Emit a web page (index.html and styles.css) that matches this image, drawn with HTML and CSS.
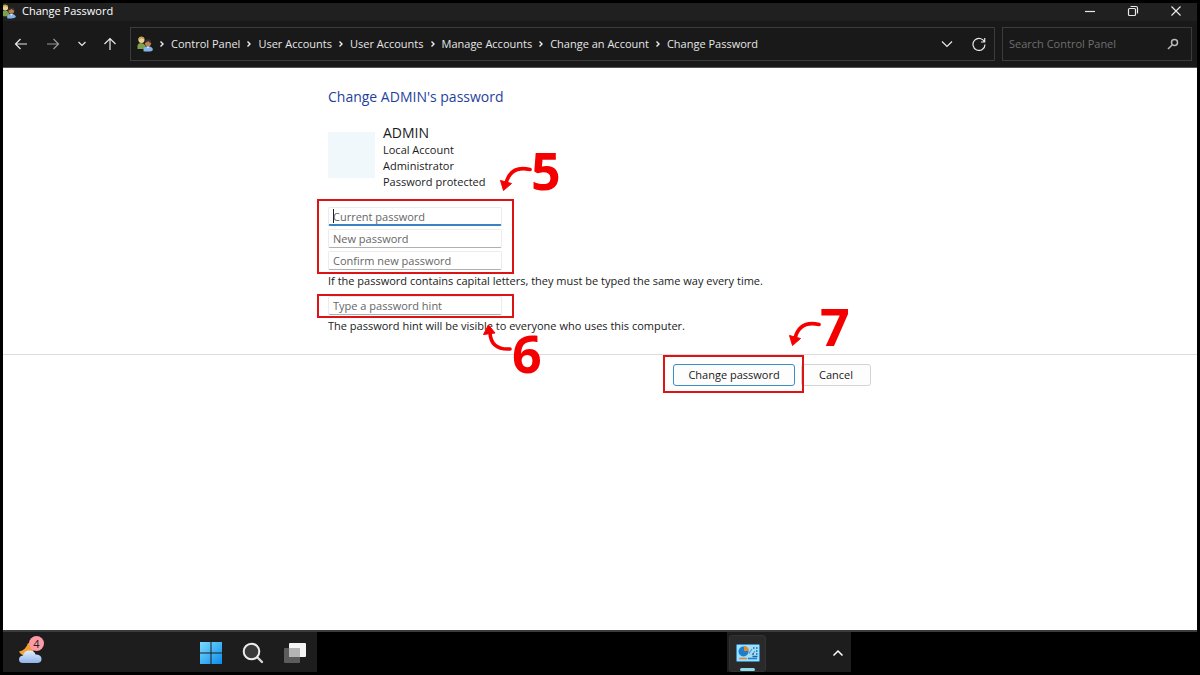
FILE: index.html
```html
<!DOCTYPE html>
<html lang="en">

<head>
    <meta charset="UTF-8">
    <meta name="viewport" content="width=device-width, initial-scale=1.0">
    <title>Change Password</title>
    <link rel="stylesheet" href="styles.css">
</head>

<body>
    <svg class="defs" aria-hidden="true">
        <defs>
            <symbol id="users" viewBox="0 0 16 16">
                <path d="M0.500 13V9.500Q1 7 4 7T8.500 9.500V13z" fill="#7f9f4c" />
                <circle cx="4.500" cy="4" r="3" fill="#e8cf9a" />
                <path d="M1.300 5V2.600Q2 0.300 4.600 0.400T7.600 3Q5.500 3.400 4.300 2.200Q3.300 3.300 2.300 3.500z" fill="#c7a54b" />
                <path d="M6.500 15.300V13Q7.500 10.300 11 10.300T15.800 13V14Q15 15.500 11 15.500T6.500 15.300z" fill="#84b4ea" />
                <path d="M9.500 10.500L11 12.500L12.600 10.500z" fill="#e9f2fb" />
                <circle cx="11" cy="7.200" r="3.100" fill="#b98254" />
                <path d="M8 7Q7.500 3.400 11 3.300T14.200 7.300Q12.500 6.600 11.500 5.300Q10 6 8 7z" fill="#3d2c22" />
            </symbol>
            <symbol id="chevron" viewBox="0 0 6 8">
                <path d="M1.500 1.500L4 4L1.500 6.500" fill="none" stroke="#f0f0f0" stroke-width="1.400" />
            </symbol>
            <symbol id="arrow" viewBox="0 0 34 28">
                <path d="M30 4.500Q11 0 6 18" fill="none" stroke="#f50000" stroke-width="3.600" stroke-linecap="round" />
                <path d="M0.500 15.500L3.500 25.500L11.500 18.500z" fill="#f50000" stroke="#f50000" stroke-linejoin="round" />
            </symbol>
        </defs>
    </svg>

    <div class="window">
        <header class="titlebar">
            <svg class="title-icon" viewBox="2 0 14 16"><use href="#users" width="16" height="16" /></svg>
            <span class="title">Change Password</span>
            <div class="window-controls">
                <button type="button" aria-label="Minimize">
                    <svg width="12" height="12" viewBox="0 0 12 12"><path d="M1 6.500H11" /></svg>
                </button>
                <button type="button" aria-label="Restore">
                    <svg width="12" height="12" viewBox="0 0 12 12">
                        <rect x="1.500" y="3.500" width="7" height="7" rx="1" />
                        <path d="M3.500 1.500H9Q10.500 1.500 10.500 3V8.500" />
                    </svg>
                </button>
                <button type="button" aria-label="Close">
                    <svg width="12" height="12" viewBox="0 0 12 12"><path d="M1.500 1.500L10.500 10.500M10.500 1.500L1.500 10.500" /></svg>
                </button>
            </div>
        </header>

        <div class="navbar">
            <div class="nav-buttons">
                <button type="button" aria-label="Back">
                    <svg width="14" height="14" viewBox="0 0 14 14"><path d="M13 7H1.500M6.500 2L1.500 7L6.500 12" /></svg>
                </button>
                <button type="button" class="dim" aria-label="Forward">
                    <svg width="14" height="14" viewBox="0 0 14 14"><path d="M1 7H12.500M7.500 2L12.500 7L7.500 12" /></svg>
                </button>
                <button type="button" class="narrow" aria-label="Recent locations">
                    <svg width="10" height="14" viewBox="0 0 10 14"><path d="M1.500 5L5 8.500L8.500 5" /></svg>
                </button>
                <button type="button" aria-label="Up">
                    <svg width="14" height="14" viewBox="0 0 14 14"><path d="M7 13V1.500M1.500 7L7 1.500L12.500 7" /></svg>
                </button>
            </div>
            <nav class="address">
                <svg class="address-icon" viewBox="0 0 16 16"><use href="#users" /></svg>
                <svg class="chevron"><use href="#chevron" /></svg>
                <a href="#">Control Panel</a>
                <svg class="chevron"><use href="#chevron" /></svg>
                <a href="#">User Accounts</a>
                <svg class="chevron"><use href="#chevron" /></svg>
                <a href="#">User Accounts</a>
                <svg class="chevron"><use href="#chevron" /></svg>
                <a href="#">Manage Accounts</a>
                <svg class="chevron"><use href="#chevron" /></svg>
                <a href="#">Change an Account</a>
                <svg class="chevron"><use href="#chevron" /></svg>
                <a href="#">Change Password</a>
                <div class="address-buttons">
                    <button type="button" aria-label="Previous locations">
                        <svg width="12" height="12" viewBox="0 0 12 12"><path d="M1 3.500L6 8.500L11 3.500" /></svg>
                    </button>
                    <button type="button" aria-label="Refresh">
                        <svg width="14" height="14" viewBox="0 0 14 14"><path d="M12.500 5A6 6 0 1 0 13 7.500M12.700 1V5H9" /></svg>
                    </button>
                </div>
            </nav>
            <label class="search">
                <input type="text" placeholder="Search Control Panel" aria-label="Search Control Panel">
                <svg width="12" height="12" viewBox="0 0 12 12">
                    <circle cx="7.500" cy="4.500" r="3" />
                    <path d="M5.300 6.700L1 11" />
                </svg>
            </label>
        </div>

        <main>
            <form class="password-form">
                <div class="form-body">
                    <h1>Change ADMIN's password</h1>
                    <div class="account">
                        <div class="avatar"></div>
                        <div class="account-info">
                            <h2>ADMIN</h2>
                            <p>Local Account</p>
                            <p>Administrator</p>
                            <p>Password protected</p>
                        </div>
                    </div>

                    <div class="fields passwords">
                        <input class="active" type="text" placeholder="Current password" aria-label="Current password">
                        <span class="caret"></span>
                        <input type="text" placeholder="New password" aria-label="New password">
                        <input type="text" placeholder="Confirm new password" aria-label="Confirm new password">
                        <div class="mark mark-fields"></div>
                        <svg class="step-arrow arrow-5"><use href="#arrow" /></svg>
                        <span class="step step-5">5</span>
                    </div>
                    <p class="note">If the password contains capital letters, they must be typed the same way every time.</p>

                    <div class="fields hint">
                        <input type="text" placeholder="Type a password hint" aria-label="Type a password hint">
                        <div class="mark mark-hint"></div>
                        <svg class="step-arrow arrow-6" viewBox="0 0 34 28">
                            <path d="M8 9Q9 26 28 25" fill="none" stroke="#f50000" stroke-width="3.600" stroke-linecap="round" />
                            <path d="M1.500 10.500L6.500 1L13 9z" fill="#f50000" stroke="#f50000" stroke-linejoin="round" />
                        </svg>
                        <span class="step step-6">6</span>
                    </div>
                    <p class="note">The password hint will be visible to everyone who uses this computer.</p>
                </div>

                <div class="form-actions">
                    <div class="primary-wrap">
                        <button type="submit" class="primary">Change password</button>
                        <div class="mark mark-button"></div>
                        <svg class="step-arrow arrow-7"><use href="#arrow" /></svg>
                        <span class="step step-7">7</span>
                    </div>
                    <button type="button" class="cancel">Cancel</button>
                </div>
            </form>
        </main>

        <footer class="taskbar">
            <div class="task-group task-left">
                <button type="button" class="weather" aria-label="Weather, 4 notifications">
                    <svg width="24" height="20" viewBox="0 0 24 20">
                        <defs>
                            <linearGradient id="cloud" x2="0" y2="1">
                                <stop stop-color="#e4eefc" />
                                <stop offset="1" stop-color="#8fb4ec" />
                            </linearGradient>
                        </defs>
                        <path d="M10 0Q8 7 1 8.500Q4 14 10 12Q17 10 16 2z" fill="#f2a030" />
                        <path d="M5 20Q1 20 1 16.500Q1 13 5 12.500Q6 7.500 11.500 7.500Q16.500 7.500 17.500 11.500Q23.500 11.500 23.500 16Q23.500 20 19 20z" fill="url(#cloud)" />
                    </svg>
                    <span class="badge">4</span>
                </button>
                <div class="task-icons">
                    <button type="button" aria-label="Start">
                        <svg width="22" height="22" viewBox="0 0 22 22">
                            <defs>
                                <linearGradient id="win" gradientUnits="userSpaceOnUse" x1="0" y1="0" x2="22" y2="22">
                                    <stop stop-color="#7ddcff" />
                                    <stop offset="1" stop-color="#0a8bea" />
                                </linearGradient>
                            </defs>
                            <path d="M0 0H10.500V10.500H0zM11.500 0H22V10.500H11.500zM0 11.500H10.500V22H0zM11.500 11.500H22V22H11.500z" fill="url(#win)" />
                        </svg>
                    </button>
                    <button type="button" aria-label="Search">
                        <svg width="22" height="22" viewBox="0 0 22 22">
                            <path d="M15 15L20 20" fill="none" stroke="#d8d8d8" stroke-width="2.400" stroke-linecap="round" />
                            <circle cx="9.500" cy="9.500" r="7.800" fill="#3a3a3a" stroke="#ededed" stroke-width="2" />
                        </svg>
                    </button>
                    <button type="button" aria-label="Task view">
                        <svg width="22" height="22" viewBox="0 0 22 22">
                            <rect x="5" y="1" width="17" height="14" rx="1" fill="#f4f4f4" />
                            <rect y="6" width="16" height="15" rx="1" fill="#5c5c5c" />
                            <path d="M5 6H16V15H5z" fill="#b4b4b4" />
                        </svg>
                    </button>
                </div>
            </div>
            <div class="task-group task-right">
                <button type="button" class="running" aria-label="Control Panel">
                    <svg width="24" height="18" viewBox="0 0 24 18">
                        <rect x="0.500" y="0.500" width="23" height="17" rx="1" fill="#a6dcf5" stroke="#2c8fd0" />
                        <circle cx="7.500" cy="7.500" r="5" fill="#1b7fcb" />
                        <path d="M8 7V2A5 5 0 0 1 13 7z" fill="#e08a2c" />
                        <path d="M13 9.500L16 5M16 11L19 7" stroke="#4a9bd0" stroke-width="1.200" />
                        <path d="M17 4H18.500M20 4H21.500M20 7H21.500M16.500 10H18M20 10H21.500M16.500 12.500H21.500" stroke="#1568a8" stroke-width="1.500" />
                        <path d="M3 14.500H11" stroke="#e08a2c" stroke-width="1.500" />
                        <path d="M12 14.500H21" stroke="#1b7fcb" stroke-width="1.500" />
                    </svg>
                </button>
                <button type="button" class="tray" aria-label="Show hidden icons">
                    <svg width="12" height="12" viewBox="0 0 12 12"><path d="M1.500 8.500L6 4L10.500 8.500" fill="none" stroke="#fff" stroke-width="1.500" /></svg>
                </button>
            </div>
        </footer>
    </div>
</body>

</html>
```

FILE: styles.css
```css
* {
    box-sizing: border-box;
}

body {
    margin: 0;
    padding: 3px;
    background: #000;
    font-family: "Open Sans", "Noto Sans", sans-serif;
    font-size: 11px;
    line-height: 16px;
    color: #1a1a1a;
}

h1,
h2,
p {
    margin: 0;
    font-weight: 400;
}

button,
input {
    font: inherit;
    color: inherit;
    padding: 0;
    border: 0;
    background: none;
    outline: none;
}

svg {
    display: block;
    flex: none;
}

.defs {
    position: absolute;
    width: 0;
    height: 0;
}

.window {
    display: flex;
    flex-direction: column;
    min-height: calc(100vh - 6px);
}

/* title bar */

.titlebar {
    display: flex;
    align-items: center;
    height: 18px;
    padding-bottom: 2px;
    background: #202020;
    color: #fff;
}

.title-icon {
    width: 13px;
    height: 15px;
}

.title {
    margin-left: 6px;
}

.window-controls {
    display: flex;
    margin-left: auto;
}

.window-controls button {
    display: flex;
    justify-content: center;
    width: 43px;
}

.window-controls svg,
.navbar button svg,
.search svg {
    fill: none;
    stroke: #e8e8e8;
    stroke-width: 1.2;
}

/* address row */

.navbar {
    display: flex;
    align-items: center;
    height: 47px;
    padding: 0 5px 0 2px;
    background: #191919;
    border-bottom: 1px solid #555;
    color: #e6e6e6;
}

.nav-buttons {
    display: flex;
    width: 125px;
}

.nav-buttons button {
    display: flex;
    justify-content: center;
    width: 32px;
}

.nav-buttons .narrow {
    width: 25px;
}

.nav-buttons svg {
    stroke-width: 1.5;
}

.nav-buttons .dim svg {
    stroke: #999;
}

.address {
    display: flex;
    flex: 1;
    align-items: center;
    height: 34px;
    padding: 0 8px 0 6px;
    border: 1px solid #3c3c3c;
}

.address-icon {
    width: 16px;
    height: 16px;
}

.address a {
    color: inherit;
    text-decoration: none;
    white-space: nowrap;
}

.chevron {
    width: 6px;
    height: 8px;
    margin: 0 6px;
}

.address-buttons {
    display: flex;
    gap: 19px;
    margin-left: auto;
}

.search {
    display: flex;
    align-items: center;
    width: 190px;
    height: 34px;
    margin-left: 7px;
    padding: 0 12px 0 6px;
    border: 1px solid #3c3c3c;
}

.search input {
    flex: 1;
    min-width: 0;
}

.search input::placeholder {
    color: #6e6e6e;
}

.search svg {
    stroke: #bbb;
    stroke-width: 1.5;
}

/* page */

main {
    flex: 1;
    background: #fff;
}

.form-body {
    padding: 17px 0 20px 325px;
    border-bottom: 1px solid #dcdcdc;
}

h1 {
    font-size: 14px;
    line-height: 24px;
    color: #1f3f9c;
}

.account {
    display: flex;
    gap: 8px;
    margin-top: 15px;
}

.avatar {
    width: 47px;
    height: 46px;
    margin-top: 8px;
    background: #f0f8fc;
}

.account h2 {
    font-size: 14px;
    line-height: 18px;
}

.fields {
    position: relative;
    display: flex;
    flex-direction: column;
    gap: 3px;
    width: 174px;
}

.passwords {
    margin-top: 17px;
}

.hint {
    margin-top: 7px;
}

.fields input {
    height: 19px;
    padding: 0 4px;
    border: 1px solid #ececec;
    border-bottom-color: #b0b0b0;
    border-radius: 2px;
}

.fields .active {
    border-bottom: 2px solid #3b82c4;
}

.fields input::placeholder {
    color: #666;
}

.caret {
    position: absolute;
    top: 2px;
    left: 5px;
    width: 1px;
    height: 14px;
    background: #222;
}

.note {
    margin-top: 3px;
}

.form-actions {
    display: flex;
    gap: 6px;
    padding: 9px 0 0 670px;
}

.form-actions button {
    height: 22px;
    border: 1px solid #d4d4d4;
    border-radius: 3px;
    background: #fdfdfd;
}

.primary-wrap {
    position: relative;
}

.form-actions .primary {
    width: 122px;
    border-color: #3b8fc8;
}

.form-actions .cancel {
    width: 70px;
}

/* step marks over the form */

.mark {
    position: absolute;
    border: 2px solid #dc1414;
    pointer-events: none;
}

.mark-fields {
    inset: -8px -12px -4px -11px;
}

.mark-hint {
    inset: -2px -12px -3px -11px;
}

.mark-button {
    inset: -9px -9px -7px -10px;
}

.step {
    position: absolute;
    font-size: 52px;
    font-weight: 700;
    line-height: 38px;
    color: #f50000;
}

.step-arrow {
    position: absolute;
    width: 34px;
    height: 28px;
}

.step-5 {
    top: -56px;
    left: 203px;
}

.arrow-5 {
    top: -42px;
    left: 172px;
}

.step-6 {
    top: 38px;
    left: 184px;
}

.arrow-6 {
    top: 28px;
    left: 154px;
}

.step-7 {
    top: -57px;
    left: 147px;
}

.arrow-7 {
    top: -44px;
    left: 116px;
}

/* taskbar */

.taskbar {
    display: flex;
    justify-content: space-between;
    height: 42px;
    border-top: 2px solid #3a3d3d;
}

.task-group {
    display: flex;
    align-items: center;
    padding-top: 2px;
    background: #1d1d1d;
}

.task-left {
    justify-content: space-between;
    width: 314px;
    padding-left: 15px;
    padding-right: 11px;
}

.task-icons {
    display: flex;
    gap: 20px;
}

.weather {
    position: relative;
}

.badge {
    position: absolute;
    top: -7px;
    left: 11px;
    width: 15px;
    height: 15px;
    border-radius: 50%;
    background: #ff99a4;
    color: #222;
    font-size: 11px;
    line-height: 15px;
}

.task-right {
    justify-content: space-between;
    width: 124px;
    margin-right: 346px;
    padding-left: 2px;
    padding-right: 7px;
}

.running {
    position: relative;
    display: flex;
    align-items: center;
    justify-content: center;
    width: 37px;
    height: 37px;
    border: 1px solid #333;
    border-radius: 3px;
    background: #2a2a2a;
}

.running::after {
    content: "";
    position: absolute;
    bottom: 0;
    left: 10px;
    width: 15px;
    height: 3px;
    border-radius: 2px;
    background: #8fdde8;
}
```
